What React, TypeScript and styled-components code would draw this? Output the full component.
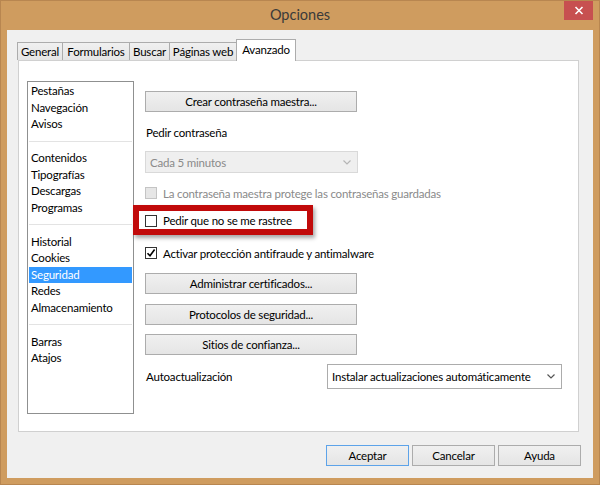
import React from "react";
import styled, { createGlobalStyle, css } from "styled-components";

const GlobalStyle = createGlobalStyle`
  html, body { margin: 0; padding: 0; }
  body { width: 600px; height: 485px; overflow: hidden; background: #ffffff; }
  * { box-sizing: border-box; }
`;

const UI_FONT = `Lato, "Noto Sans", sans-serif`;

const Window = styled.div`
  width: 600px;
  height: 485px;
  display: flex;
  flex-direction: column;
  background: #cf9c5f;
  border: 1px solid #b88650;
  padding: 0 6px 6px;
  font-family: ${UI_FONT};
  font-size: 11.5px;
  letter-spacing: -0.2px;
  color: #000;
`;

const TitleBar = styled.div`
  height: 29px;
  display: grid;
  grid-template-columns: 1fr auto 1fr;
  align-items: center;
`;

const Title = styled.div`
  grid-column: 2;
  font-size: 14.5px;
  letter-spacing: 0;
  color: #3a3a3a;
  line-height: 20px;
  margin-top: -1px;
`;

const CloseButton = styled.div`
  grid-column: 3;
  justify-self: end;
  align-self: start;
  width: 29px;
  height: 19px;
  background: #c75050;
  display: flex;
  align-items: center;
  justify-content: center;
`;

const Client = styled.div`
  flex: 1;
  background: #f0f0f0;
  padding: 9px 14px 0 11px;
  display: flex;
  flex-direction: column;
`;

const TabStrip = styled.div`
  display: flex;
  align-items: flex-end;
  height: 21px;
  position: relative;
  z-index: 1;
`;

const Tab = styled.div<{ $w: number; $active?: boolean }>`
  width: ${(p) => p.$w}px;
  height: 18px;
  display: flex;
  align-items: center;
  justify-content: center;
  border: 1px solid #acacac;
  border-bottom: none;
  margin-left: -1px;
  background: linear-gradient(#f0f0f0, #e5e5e5);
  line-height: 16px;
  white-space: nowrap;
  ${(p) =>
    p.$active &&
    css`
      height: 22px;
      margin-bottom: -1px;
      background: #ffffff;
      padding-bottom: 2px;
    `}
`;

const TabPage = styled.div`
  height: 372px;
  background: #ffffff;
  border: 1px solid #d0d0d0;
  display: flex;
  padding: 20px 0 0 8px;
`;

const CategoryList = styled.div`
  width: 107px;
  height: 333px;
  border: 1px solid #8f9090;
  padding: 1px;
  display: flex;
  flex-direction: column;
`;

const CategoryItem = styled.div<{ $selected?: boolean }>`
  height: 16.5px;
  line-height: 16.5px;
  padding-left: 2px;
  white-space: nowrap;
  ${(p) =>
    p.$selected &&
    css`
      background: #3399ff;
      color: #ffffff;
    `}
`;

const CategorySeparator = styled.div`
  height: 17.5px;
  display: flex;
  align-items: center;
  &::after {
    content: "";
    flex: 1;
    height: 1px;
    background: #e3e3e3;
  }
`;

const Settings = styled.div`
  width: 417px;
  margin-left: 11px;
  padding-top: 10px;
  display: flex;
  flex-direction: column;
  align-items: flex-start;
`;

const PushButton = styled.div<{ $mt?: number }>`
  width: 212px;
  height: 21px;
  margin-top: ${(p) => p.$mt ?? 0}px;
  border: 1px solid #acacac;
  background: linear-gradient(#f0f0f0, #e5e5e5);
  display: flex;
  align-items: center;
  justify-content: center;
  line-height: 16px;
`;

const FieldLabel = styled.div<{ $mt?: number }>`
  margin-top: ${(p) => p.$mt ?? 0}px;
  line-height: 16px;
  padding-left: 1px;
`;

const Combo = styled.div<{ $disabled?: boolean; $w: number; $h: number; $mt?: number }>`
  width: ${(p) => p.$w}px;
  height: ${(p) => p.$h}px;
  margin-top: ${(p) => p.$mt ?? 0}px;
  display: flex;
  align-items: center;
  justify-content: space-between;
  padding: 0 6px 0 4px;
  border: 1px solid ${(p) => (p.$disabled ? "#d9d9d9" : "#acacac")};
  background: ${(p) => (p.$disabled ? "#efefef" : "#ffffff")};
  color: ${(p) => (p.$disabled ? "#8a8a8a" : "#000000")};
  white-space: nowrap;
`;

const CheckRow = styled.div<{ $disabled?: boolean; $mt?: number }>`
  display: flex;
  align-items: center;
  gap: 6px;
  height: 16px;
  margin-top: ${(p) => p.$mt ?? 0}px;
  color: ${(p) => (p.$disabled ? "#8a8a8a" : "#000000")};
  white-space: nowrap;
`;

const CheckBox = styled.div<{ $disabled?: boolean }>`
  width: 12px;
  height: 12px;
  border: 1px solid ${(p) => (p.$disabled ? "#c4c4c4" : "#333333")};
  background: ${(p) => (p.$disabled ? "#e6e6e6" : "#ffffff")};
  display: flex;
  align-items: center;
  justify-content: center;
`;

const Highlight = styled.div`
  margin: 4px 0 0 -12px;
  width: 180px;
  height: 30px;
  border: 6px solid #c10a0a;
  padding: 1px 0 0 6px;
  display: flex;
  align-items: center;
  background: #ffffff;
  box-shadow: 2px 3px 4px rgba(0, 0, 0, 0.35);
`;

const UpdateRow = styled.div`
  width: 417px;
  margin-top: 9px;
  display: flex;
  align-items: center;
  justify-content: space-between;
`;

const Footer = styled.div`
  display: flex;
  justify-content: flex-end;
  gap: 3px;
  margin: 13px -2px 0 0;
`;

const DialogButton = styled.div<{ $default?: boolean }>`
  width: 83px;
  height: 21px;
  border: 1px solid ${(p) => (p.$default ? "#5da3e9" : "#acacac")};
  background: linear-gradient(#f0f0f0, #e5e5e5);
  display: flex;
  align-items: center;
  justify-content: center;
  line-height: 16px;
`;

const Chevron = ({ color }: { color: string }) => (
  <svg width="8" height="5" viewBox="0 0 8 5">
    <path d="M0.5 0.5 L4 4 L7.5 0.5" fill="none" stroke={color} strokeWidth="1.2" />
  </svg>
);

const CheckMark = () => (
  <svg width="10" height="10" viewBox="0 0 10 10">
    <path d="M1.5 5.2 L4 7.8 L8.6 1.6" fill="none" stroke="#000" strokeWidth="1.6" />
  </svg>
);

const CloseGlyph = () => (
  <svg width="10" height="9" viewBox="0 0 10 9">
    <path d="M1.5 1 L8.5 8 M8.5 1 L1.5 8" stroke="#fff" strokeWidth="1.6" />
  </svg>
);

const tabs = [
  { label: "General", w: 46 },
  { label: "Formularios", w: 68 },
  { label: "Buscar", w: 41 },
  { label: "Páginas web", w: 68 },
  { label: "Avanzado", w: 60, active: true },
];

const groups = [
  ["Pestañas", "Navegación", "Avisos"],
  ["Contenidos", "Tipografías", "Descargas", "Programas"],
  ["Historial", "Cookies", "Seguridad", "Redes", "Almacenamiento"],
  ["Barras", "Atajos"],
];

export default function App() {
  return (
    <>
      <GlobalStyle />
      <Window>
        <TitleBar>
          <Title>Opciones</Title>
          <CloseButton>
            <CloseGlyph />
          </CloseButton>
        </TitleBar>
        <Client>
          <TabStrip>
            {tabs.map((t) => (
              <Tab key={t.label} $w={t.w} $active={t.active}>
                {t.label}
              </Tab>
            ))}
          </TabStrip>
          <TabPage>
            <CategoryList>
              {groups.map((g, gi) => (
                <React.Fragment key={gi}>
                  {gi > 0 && <CategorySeparator />}
                  {g.map((item) => (
                    <CategoryItem key={item} $selected={item === "Seguridad"}>
                      {item}
                    </CategoryItem>
                  ))}
                </React.Fragment>
              ))}
            </CategoryList>
            <Settings>
              <PushButton>Crear contraseña maestra...</PushButton>
              <FieldLabel $mt={13}>Pedir contraseña</FieldLabel>
              <Combo $disabled $w={213} $h={22} $mt={10}>
                <span>Cada 5 minutos</span>
                <Chevron color="#b5b5b5" />
              </Combo>
              <CheckRow $disabled $mt={12}>
                <CheckBox $disabled />
                <span>La contraseña maestra protege las contraseñas guardadas</span>
              </CheckRow>
              <Highlight>
                <CheckRow>
                  <CheckBox />
                  <span>Pedir que no se me rastree</span>
                </CheckRow>
              </Highlight>
              <CheckRow $mt={10}>
                <CheckBox>
                  <CheckMark />
                </CheckBox>
                <span>Activar protección antifraude y antimalware</span>
              </CheckRow>
              <PushButton $mt={12}>Administrar certificados...</PushButton>
              <PushButton $mt={10}>Protocolos de seguridad...</PushButton>
              <PushButton $mt={9}>Sitios de confianza...</PushButton>
              <UpdateRow>
                <FieldLabel>Autoactualización</FieldLabel>
                <Combo $w={235} $h={25}>
                  <span>Instalar actualizaciones automáticamente</span>
                  <Chevron color="#555" />
                </Combo>
              </UpdateRow>
            </Settings>
          </TabPage>
          <Footer>
            <DialogButton $default>Aceptar</DialogButton>
            <DialogButton>Cancelar</DialogButton>
            <DialogButton>Ayuda</DialogButton>
          </Footer>
        </Client>
      </Window>
    </>
  );
}
